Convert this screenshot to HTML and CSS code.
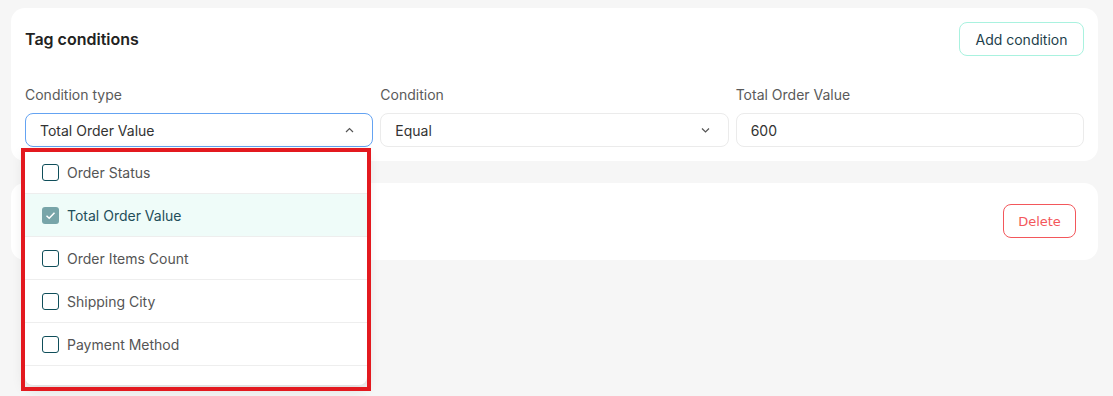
FILE: index.html
```html
<!DOCTYPE html>
<html lang="en">
<head>
    <meta charset="UTF-8">
    <meta name="viewport" content="width=device-width, initial-scale=1.0">
    <title>Tag conditions</title>
    <link rel="stylesheet" href="styles.css">
</head>
<body>
    <div class="page">
        <div class="card">
            <div class="card-header">
                <h3>Tag conditions</h3>
                <button class="btn btn-add">Add condition</button>
            </div>
            <div class="fields">
                <div class="field">
                    <label>Condition type</label>
                    <div class="select-wrap">
                        <div class="select open">
                            <span>Total Order Value</span>
                            <svg class="chevron" width="9" height="6" viewBox="0 0 9 6"><polyline points="1,5 4.5,1.5 8,5" fill="none" stroke="#555" stroke-width="1.2"/></svg>
                        </div>
                        <ul class="menu">
                            <li class="item">
                                <span class="check"></span>
                                Order Status
                            </li>
                            <li class="item selected">
                                <span class="check checked">
                                    <svg width="11" height="9" viewBox="0 0 11 9"><polyline points="1.5,4.8 4.2,7.3 9.5,1.8" fill="none" stroke="#fff" stroke-width="1.5"/></svg>
                                </span>
                                Total Order Value
                            </li>
                            <li class="item">
                                <span class="check"></span>
                                Order Items Count
                            </li>
                            <li class="item">
                                <span class="check"></span>
                                Shipping City
                            </li>
                            <li class="item">
                                <span class="check"></span>
                                Payment Method
                            </li>
                        </ul>
                        <div class="highlight-box"></div>
                    </div>
                </div>
                <div class="field">
                    <label>Condition</label>
                    <div class="select">
                        <span>Equal</span>
                        <svg class="chevron" width="9" height="6" viewBox="0 0 9 6"><polyline points="1,1.5 4.5,5 8,1.5" fill="none" stroke="#555" stroke-width="1.2"/></svg>
                    </div>
                </div>
                <div class="field">
                    <label>Total Order Value</label>
                    <input type="text" class="input" value="600">
                </div>
            </div>
        </div>

        <div class="card card-row">
            <button class="btn btn-delete">Delete</button>
        </div>
    </div>
</body>
</html>
```

FILE: styles.css
```css
body {
    font-family: Inter, "Noto Sans", sans-serif;
    margin: 0;
    padding: 0;
    min-height: 396px;
    background-color: #f6f6f6;
    color: #333;
}
.page {
    position: relative;
    min-height: 396px;
    box-sizing: border-box;
    padding: 8px 15px 0 11px;
}
.card {
    background-color: #fff;
    border-radius: 14px;
    padding: 14px;
}
.card-header {
    display: flex;
    justify-content: space-between;
    align-items: center;
    margin-bottom: 29px;
}
.card-header h3 {
    margin: 0;
    font-size: 16px;
    font-weight: 600;
    color: #222;
}
.btn {
    height: 34px;
    background: #fff;
    border-radius: 8px;
    font-family: inherit;
    font-size: 14px;
    cursor: pointer;
}
.btn-add {
    width: 125px;
    border: 1px solid #a9f2df;
    color: #1e3f4c;
}
.fields {
    display: grid;
    grid-template-columns: repeat(3, 1fr);
    gap: 7px;
}
.field label {
    display: block;
    font-size: 14px;
    line-height: 20px;
    color: #5a5a5a;
    margin-bottom: 8px;
}
.select,
.input {
    box-sizing: border-box;
    height: 34px;
    width: 100%;
    border: 1px solid #ebebeb;
    border-radius: 8px;
    padding: 0 18px 0 14px;
    font-family: inherit;
    font-size: 14px;
    color: #333;
    background: #fff;
}
.select {
    display: flex;
    justify-content: space-between;
    align-items: center;
}
.select.open {
    border-color: #64a3f2;
}
.input {
    outline: none;
}
.select-wrap {
    position: relative;
}
.menu {
    position: absolute;
    top: 36px;
    left: 0;
    width: 342px;
    margin: 0;
    padding: 2px 0 19px;
    list-style: none;
    background: #fff;
    border-radius: 0 0 8px 8px;
    box-shadow: 0 4px 14px rgba(0,0,0,0.12);
    z-index: 2;
}
.item {
    display: flex;
    align-items: center;
    gap: 8px;
    height: 42px;
    padding-left: 17px;
    border-bottom: 1px solid #eeeeee;
    font-size: 14px;
    color: #555;
}
.item.selected {
    background-color: #effcf9;
    color: #1f4e5a;
}
.check {
    box-sizing: border-box;
    width: 17px;
    height: 17px;
    border: 1.5px solid #0f4e5a;
    border-radius: 3px;
    display: flex;
    align-items: center;
    justify-content: center;
}
.check.checked {
    border: none;
    background-color: #78a5a9;
}
.highlight-box {
    position: absolute;
    top: 35px;
    left: -4px;
    width: 350px;
    height: 243px;
    box-sizing: border-box;
    border: 4px solid #e3191f;
    z-index: 3;
}
.card-row {
    margin-top: 22px;
    padding: 21px 22px 22px;
    display: flex;
    justify-content: flex-end;
}
.btn-delete {
    width: 73px;
    border: 1px solid #f3575b;
    color: #f3575b;
    font-family: "DejaVu Sans", sans-serif;
    font-size: 13px;
}
```
